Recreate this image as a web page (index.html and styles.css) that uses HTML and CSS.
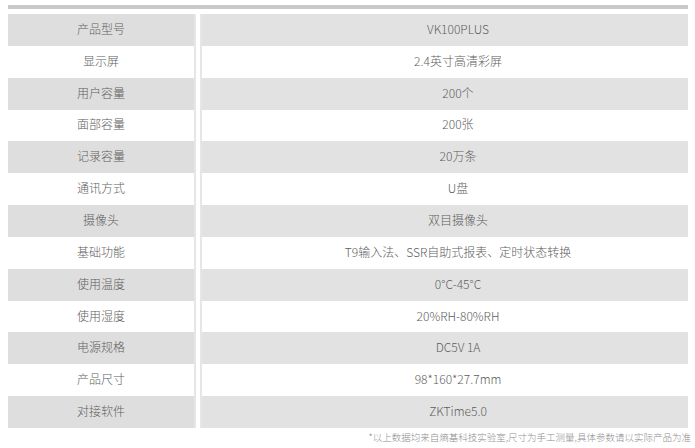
FILE: index.html
```html
<!DOCTYPE html>
<html lang="zh">
<head>
<meta charset="utf-8">
<link rel="stylesheet" href="styles.css">
</head>
<body>
<div class="page">
  <div class="topbar"></div>
  <div class="table">
    <div class="row grey"><div class="k">产品型号</div><div class="v">VK100PLUS</div></div>
    <div class="row"><div class="k">显示屏</div><div class="v">2.4英寸高清彩屏</div></div>
    <div class="row grey"><div class="k">用户容量</div><div class="v">200个</div></div>
    <div class="row"><div class="k">面部容量</div><div class="v">200张</div></div>
    <div class="row grey"><div class="k">记录容量</div><div class="v">20万条</div></div>
    <div class="row"><div class="k">通讯方式</div><div class="v">U盘</div></div>
    <div class="row grey"><div class="k">摄像头</div><div class="v">双目摄像头</div></div>
    <div class="row"><div class="k">基础功能</div><div class="v">T9输入法、SSR自助式报表、定时状态转换</div></div>
    <div class="row grey"><div class="k">使用温度</div><div class="v">0°C-45°C</div></div>
    <div class="row"><div class="k">使用湿度</div><div class="v">20%RH-80%RH</div></div>
    <div class="row grey"><div class="k">电源规格</div><div class="v">DC5V 1A</div></div>
    <div class="row"><div class="k">产品尺寸</div><div class="v">98*160*27.7mm</div></div>
    <div class="row grey"><div class="k">对接软件</div><div class="v">ZKTime5.0</div></div>
  </div>
  <div class="note">*以上数据均来自熵基科技实验室,尺寸为手工测量,具体参数请以实际产品为准</div>
</div>
</body>
</html>
```
FILE: styles.css
```css
html, body {
  margin: 0;
  padding: 0;
  background: #ffffff;
}
.page {
  width: 695px;
  height: 448px;
  padding: 5px 7px 0 8px;
  box-sizing: border-box;
  font-family: "Noto Sans CJK SC", "Noto Sans", sans-serif;
  font-weight: 300;
  color: #5e5e5e;
}
.topbar {
  height: 4px;
  background: #c9c9c9;
  margin-bottom: 5px;
}
.table {
  display: flex;
  flex-direction: column;
}
.row {
  display: grid;
  grid-template-columns: 188px 1fr;
  column-gap: 4px;
  height: 31.85px;
}
.k, .v {
  display: flex;
  align-items: center;
  justify-content: center;
  font-size: 12px;
  padding-bottom: 3px;
  box-sizing: border-box;
  white-space: nowrap;
}
.k {
  border-right: 2px solid #e6e6e6;
}
.v {
  border-left: 2px solid #e6e6e6;
  padding-left: 26px;
}
.row.grey .k {
  background: #dedede;
}
.row.grey .v {
  background: #e2e2e2;
}
.note {
  text-align: right;
  font-size: 9.5px;
  color: #8e8e8e;
  margin-top: 2px;
  margin-right: -3px;
  white-space: nowrap;
}
```
